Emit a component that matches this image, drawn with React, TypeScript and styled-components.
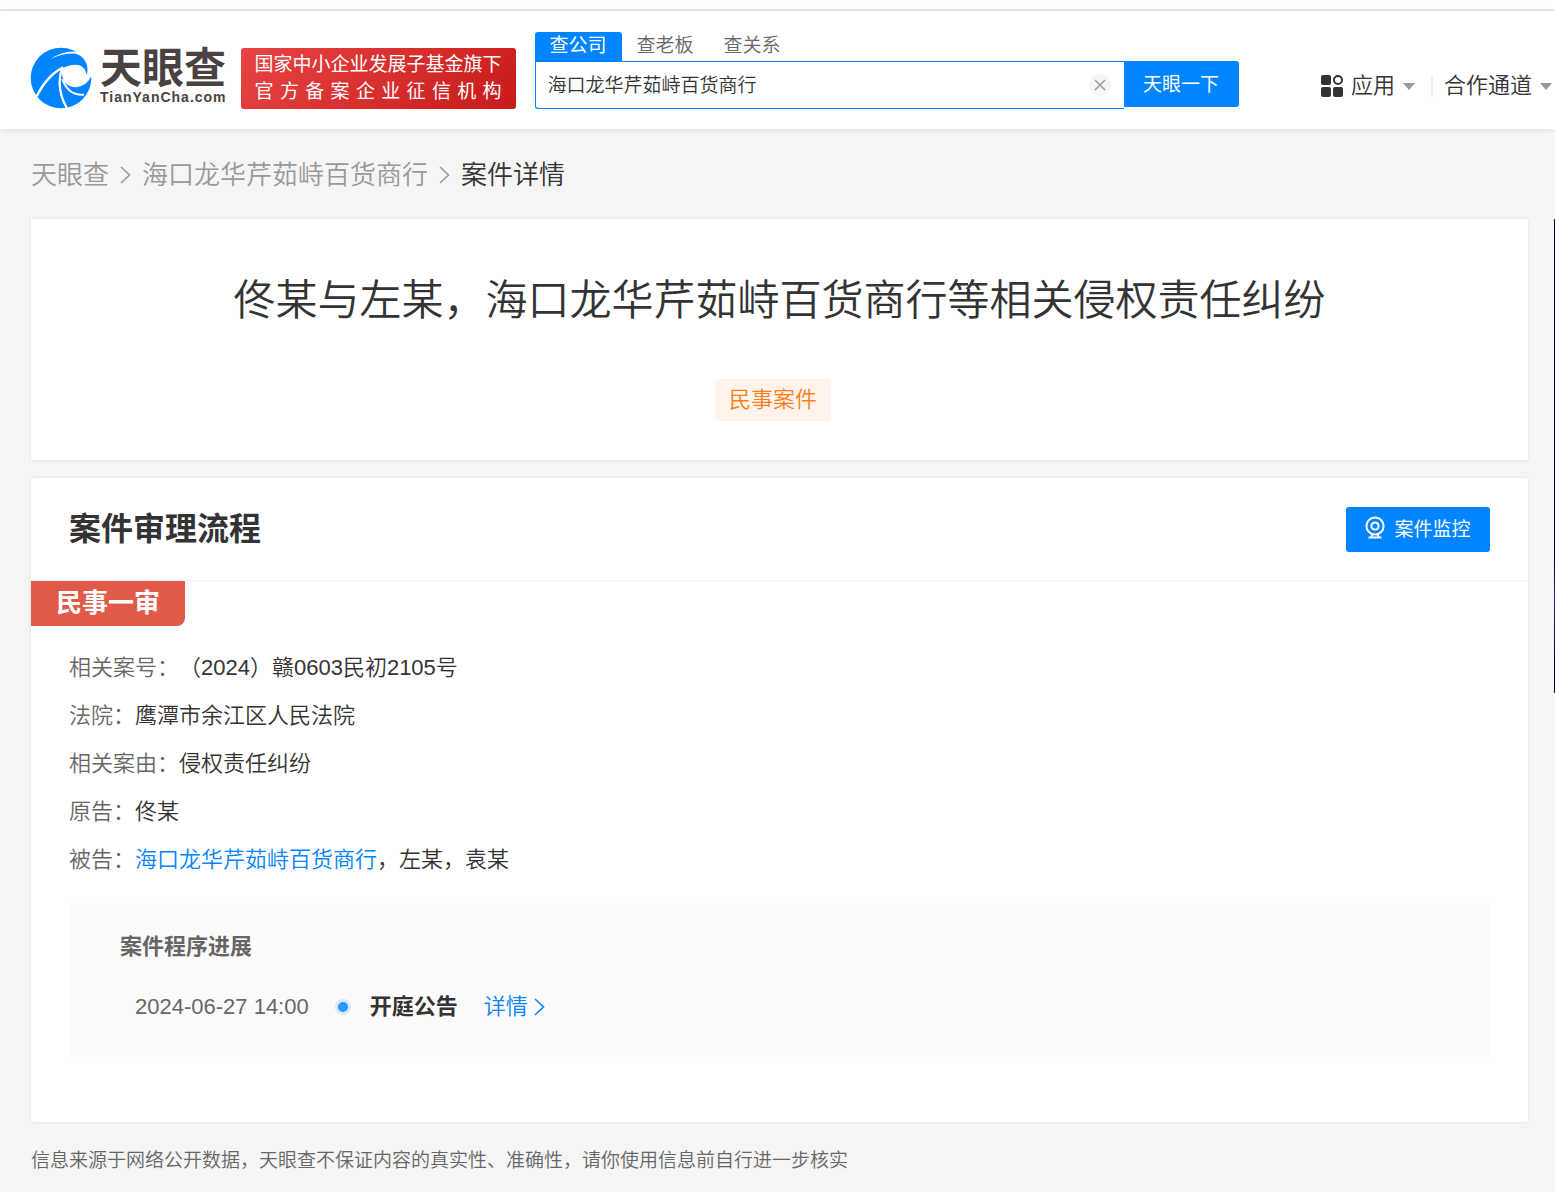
import React, { useState } from "react";
import styled, { createGlobalStyle, css } from "styled-components";

const color = {
  brand: "#0084ff",
  text: "#333",
  muted: "#666",
  faint: "#999",
  page: "#f5f5f5",
  line: "#f0f0f0",
};

const GlobalStyle = createGlobalStyle`
  *, *::before, *::after { box-sizing: border-box; }
  body {
    margin: 0;
    background: ${color.page};
    color: ${color.text};
    font-family: "Liberation Sans", "Noto Sans CJK SC", sans-serif;
    font-weight: 350;
  }
  h1, h2, h3, p, dl, dd, ol { margin: 0; padding: 0; }
  a { color: inherit; text-decoration: none; }
  button, input { font: inherit; color: inherit; border: 0; padding: 0; margin: 0; }
  button { cursor: pointer; }
`;

const TopStrip = styled.div`
  height: 11px;
  background: #fff;
  border-bottom: 2px solid #ebebeb;
`;

const Header = styled.header`
  display: flex;
  align-items: flex-start;
  height: 118px;
  padding: 21px 3px 0 30px;
  background: #fff;
  box-shadow: 0 1px 6px rgba(0, 0, 0, 0.1);
`;

const Brand = styled.a`
  display: flex;
  align-items: center;
  gap: 8px;
  margin-top: 15px;
  height: 61px;
`;

const BrandText = styled.span`
  display: flex;
  flex-direction: column;
  padding-bottom: 4px;
  color: #4a4241;
  font-weight: 700;
`;

const BrandName = styled.span`
  font-size: 42px;
  line-height: 42px;
`;

const BrandDomain = styled.span`
  font-size: 14px;
  line-height: 14px;
  letter-spacing: 1px;
`;

const Credential = styled.div`
  display: grid;
  align-content: center;
  height: 61px;
  margin: 16px 0 0 14px;
  padding: 0 14px 2px;
  border-radius: 3px;
  background: linear-gradient(135deg, #e84444, #c81a1a);
  color: #fff;
  font-size: 19px;
  line-height: 27px;
  font-weight: 400;
`;

const CredentialLine = styled.span<{ $spread?: boolean }>`
  ${(p) => p.$spread && css`text-align-last: justify;`}
`;

const Search = styled.form`
  flex: 0 1 704px;
  margin-left: 19px;
`;

const Tabs = styled.div`
  display: flex;
`;

const Tab = styled.button<{ $active?: boolean }>`
  height: 29px;
  padding: 0 15px 2px;
  border-radius: 3px 3px 0 0;
  background: ${(p) => (p.$active ? color.brand : "transparent")};
  color: ${(p) => (p.$active ? "#fff" : color.muted)};
  font-size: 19px;
  line-height: 26px;
  font-weight: ${(p) => (p.$active ? 400 : 350)};
`;

const SearchRow = styled.div`
  display: flex;
  align-items: flex-start;
`;

const SearchBox = styled.div`
  display: flex;
  align-items: center;
  flex: 1;
  height: 48px;
  padding: 0 13px 0 12px;
  border: 1px solid ${color.brand};
  border-right: 0;
  border-radius: 0 0 0 3px;
`;

const SearchInput = styled.input`
  flex: 1;
  min-width: 0;
  height: 46px;
  padding-bottom: 3px;
  background: transparent;
  outline: 0;
  font-size: 19px;
`;

const ClearButton = styled.button`
  display: grid;
  place-items: center;
  width: 22px;
  height: 22px;
  border-radius: 50%;
  background: #f5f5f5;
  color: ${color.faint};
`;

const SearchButton = styled.button`
  width: 115px;
  height: 46px;
  padding-bottom: 4px;
  border-radius: 0 3px 3px 0;
  background: ${color.brand};
  color: #fff;
  font-size: 19px;
  font-weight: 400;
`;

const Nav = styled.nav`
  display: flex;
  align-items: center;
  margin: 38px 0 0 auto;
  font-size: 22px;
  line-height: 32px;
  white-space: nowrap;
`;

const NavItem = styled.a`
  display: flex;
  align-items: center;
  gap: 8px;

  & + & {
    margin-left: 16px;
    padding-left: 13px;
    background: linear-gradient(#eee, #eee) left center / 2px 22px no-repeat;
  }
`;

const Caret = styled.span`
  border: 6px solid transparent;
  border-top: 7px solid ${color.faint};
  border-bottom: 0;
`;

const Layout = styled.div`
  display: flex;
  align-items: flex-start;
  gap: 26px;
  padding-left: 31px;
`;

const Main = styled.main`
  flex: 1;
  min-width: 0;
`;

const SideBanner = styled.aside`
  width: 1px;
  height: 474px;
  margin-top: 90px;
  background: linear-gradient(#05003c 0 72%, #2f1fb0 80%, #05003c 92%);
`;

const Breadcrumb = styled.nav`
  display: flex;
  align-items: center;
  gap: 11px;
  height: 90px;
  padding-top: 2px;
  color: ${color.faint};
  font-size: 26px;
  line-height: 40px;
`;

const Current = styled.span`
  color: ${color.text};
`;

const Card = styled.section`
  margin-bottom: 18px;
  background: #fff;
  box-shadow: 0 0 3px rgba(0, 0, 0, 0.1);
`;

const TitleCard = styled(Card)`
  display: flex;
  flex-direction: column;
  align-items: center;
  padding: 52px 38px 39px;
`;

const CaseTitle = styled.h1`
  font-size: 42px;
  line-height: 60px;
  font-weight: 350;
  text-align: center;
`;

const CaseTag = styled.span`
  margin: 48px 13px 0 0;
  padding: 0 14px;
  border-radius: 3px;
  background: #fff3eb;
  color: #ff7d18;
  font-size: 22px;
  line-height: 42px;
`;

const SectionHead = styled.div`
  display: flex;
  align-items: center;
  justify-content: space-between;
  height: 103px;
  padding: 0 38px;
  border-bottom: 1px solid ${color.line};
`;

const SectionTitle = styled.h2`
  font-size: 32px;
  line-height: 48px;
  font-weight: 700;
`;

const MonitorButton = styled.button`
  display: flex;
  align-items: center;
  justify-content: center;
  gap: 9px;
  width: 144px;
  height: 45px;
  padding-bottom: 3px;
  border-radius: 3px;
  background: ${color.brand};
  color: #fff;
  font-size: 19px;
  font-weight: 400;
`;

const Stage = styled.h3`
  display: inline-block;
  padding: 0 25px;
  border-radius: 0 0 8px 0;
  background: #e05a49;
  color: #fff;
  font-size: 26px;
  line-height: 45px;
  font-weight: 700;
`;

const StageBody = styled.div`
  padding: 18px 38px 65px;
`;

const Facts = styled.dl`
  font-size: 22px;
  line-height: 48px;
`;

const Fact = styled.div`
  display: flex;
`;

const FactLabel = styled.dt`
  color: ${color.muted};
`;

const TextLink = styled.a`
  display: inline-flex;
  align-items: center;
  gap: 6px;
  color: ${color.brand};
`;

const Progress = styled.div`
  margin-top: 19px;
  padding: 20px 51px 26px;
  border-radius: 3px;
  background: #fbfbfb;
  font-size: 22px;
  line-height: 48px;
`;

const ProgressTitle = styled.h3`
  color: ${color.muted};
  font-size: 22px;
  font-weight: 700;
`;

const ProgressList = styled.ol`
  list-style: none;
`;

const ProgressItem = styled.li`
  display: flex;
  align-items: center;
  padding: 12px 0 0 15px;
`;

const When = styled.time`
  color: ${color.muted};
  font-weight: 400;
`;

const Dot = styled.span`
  width: 16px;
  height: 16px;
  margin: 0 19px 0 26px;
  border: 3px solid #d6eaff;
  border-radius: 50%;
  background: #2b96ff;
`;

const Event = styled.strong`
  margin-right: 26px;
  font-weight: 700;
`;

const Disclaimer = styled.p`
  color: ${color.muted};
  font-size: 19px;
  line-height: 42px;
`;

const BrandMark = () => (
  <svg width="62" height="62" viewBox="0 0 186 186" aria-hidden="true">
    <circle cx="93" cy="93" r="91" fill="#0084ff" />
    <path d="M62 36Q100 10 140 14L150 0L190 20V80L171 78Q176 58 164 40Q156 26 138 20Q100 18 62 36Z" fill="#fff" />
    <path d="M97 64Q128 48 152 56Q166 64 169 80L190 76V86L184 88Q165 125 130 120Q112 117 104 106Q92 86 97 64Z" fill="#fff" />
    <path d="M100 61Q52 84 20 148" fill="none" stroke="#fff" strokeWidth="7" />
    <path d="M96 64Q76 124 112 186" fill="none" stroke="#fff" strokeWidth="7" />
    <path d="M97 96Q114 146 162 143" fill="none" stroke="#fff" strokeWidth="6" />
  </svg>
);

const AppsIcon = () => (
  <svg width="22" height="22" viewBox="0 0 22 22" aria-hidden="true" fill="#333">
    <rect width="10" height="10" rx="2" />
    <rect y="12" width="10" height="10" rx="2" />
    <rect x="12" y="12" width="10" height="10" rx="2" />
    <circle cx="17" cy="5" r="4" fill="none" stroke="#333" strokeWidth="2" />
  </svg>
);

const CameraIcon = () => (
  <svg width="20" height="23" viewBox="0 0 20 23" aria-hidden="true" fill="none" stroke="#fff" strokeWidth="2">
    <circle cx="10" cy="10" r="8.6" />
    <circle cx="10" cy="10" r="3.6" />
    <path d="M7.5 18L6.5 21M12.5 18L13.5 21M3.5 21.6H16.5" />
  </svg>
);

const Chevron = () => (
  <svg width="11" height="18" viewBox="0 0 11 18" aria-hidden="true" fill="none" stroke="currentColor" strokeWidth="1.6">
    <path d="M1 1L9.5 9L1 17" />
  </svg>
);

const CloseIcon = () => (
  <svg width="12" height="12" viewBox="0 0 12 12" aria-hidden="true" fill="none" stroke="currentColor" strokeWidth="1.5">
    <path d="M1 1L11 11M11 1L1 11" />
  </svg>
);

const company = "海口龙华芹茹峙百货商行";
const tabs = ["查公司", "查老板", "查关系"];

const facts: { label: string; value: React.ReactNode }[] = [
  { label: "相关案号：", value: "（2024）赣0603民初2105号" },
  { label: "法院：", value: "鹰潭市余江区人民法院" },
  { label: "相关案由：", value: "侵权责任纠纷" },
  { label: "原告：", value: "佟某" },
  { label: "被告：", value: <><TextLink href="#company">{company}</TextLink>，左某，袁某</> },
];

export default function App() {
  const [tab, setTab] = useState(tabs[0]);
  const [query, setQuery] = useState(company);

  return (
    <>
      <GlobalStyle />
      <TopStrip />
      <Header lang="zh-CN">
        <Brand href="#home">
          <BrandMark />
          <BrandText>
            <BrandName>天眼查</BrandName>
            <BrandDomain>TianYanCha.com</BrandDomain>
          </BrandText>
        </Brand>
        <Credential>
          <CredentialLine>国家中小企业发展子基金旗下</CredentialLine>
          <CredentialLine $spread>官方备案企业征信机构</CredentialLine>
        </Credential>
        <Search onSubmit={(e) => e.preventDefault()}>
          <Tabs>
            {tabs.map((name) => (
              <Tab key={name} type="button" $active={name === tab} onClick={() => setTab(name)}>
                {name}
              </Tab>
            ))}
          </Tabs>
          <SearchRow>
            <SearchBox>
              <SearchInput aria-label="查公司" value={query} onChange={(e) => setQuery(e.target.value)} />
              <ClearButton type="button" aria-label="清空" onClick={() => setQuery("")}>
                <CloseIcon />
              </ClearButton>
            </SearchBox>
            <SearchButton type="submit">天眼一下</SearchButton>
          </SearchRow>
        </Search>
        <Nav>
          <NavItem href="#apps"><AppsIcon />应用<Caret /></NavItem>
          <NavItem href="#partners">合作通道<Caret /></NavItem>
        </Nav>
      </Header>
      <Layout lang="zh-CN">
        <Main>
          <Breadcrumb>
            <a href="#home">天眼查</a>
            <Chevron />
            <a href="#company">{company}</a>
            <Chevron />
            <Current>案件详情</Current>
          </Breadcrumb>
          <TitleCard>
            <CaseTitle>佟某与左某，海口龙华芹茹峙百货商行等相关侵权责任纠纷</CaseTitle>
            <CaseTag>民事案件</CaseTag>
          </TitleCard>
          <Card>
            <SectionHead>
              <SectionTitle>案件审理流程</SectionTitle>
              <MonitorButton type="button"><CameraIcon />案件监控</MonitorButton>
            </SectionHead>
            <Stage>民事一审</Stage>
            <StageBody>
              <Facts>
                {facts.map((f) => (
                  <Fact key={f.label}>
                    <FactLabel>{f.label}</FactLabel>
                    <dd>{f.value}</dd>
                  </Fact>
                ))}
              </Facts>
              <Progress>
                <ProgressTitle>案件程序进展</ProgressTitle>
                <ProgressList>
                  <ProgressItem>
                    <When dateTime="2024-06-27T14:00">2024-06-27 14:00</When>
                    <Dot />
                    <Event>开庭公告</Event>
                    <TextLink href="#detail">详情<Chevron /></TextLink>
                  </ProgressItem>
                </ProgressList>
              </Progress>
            </StageBody>
          </Card>
          <Disclaimer>信息来源于网络公开数据，天眼查不保证内容的真实性、准确性，请你使用信息前自行进一步核实</Disclaimer>
        </Main>
        <SideBanner />
      </Layout>
    </>
  );
}
